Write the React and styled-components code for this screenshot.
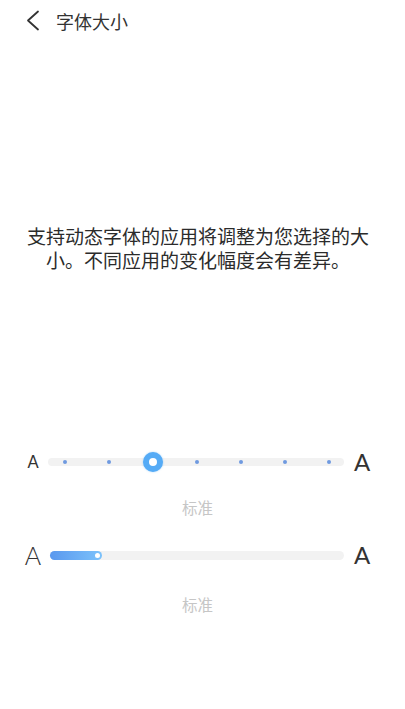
import React from "react";
import styled, { createGlobalStyle } from "styled-components";

const Global = createGlobalStyle`
  html, body { margin: 0; padding: 0; background: #ffffff; }
  body { font-family: "Noto Sans CJK SC", "Noto Sans", sans-serif; color: #333333; }
`;

const Page = styled.div`
  width: 405px;
  min-height: 709px;
  background: #fff;
  display: flex;
  flex-direction: column;
`;

const Header = styled.div`
  height: 42px;
  display: flex;
  align-items: center;
  padding-left: 26px;
`;

const BackButton = styled.div`
  width: 14px;
  height: 22px;
  display: flex;
  align-items: center;
`;

const Title = styled.div`
  margin-left: 16px;
  font-size: 18px;
  line-height: 24px;
  color: #333;
`;

const Description = styled.p`
  margin: 182px 0 0;
  padding: 0 31px 0 22px;
  font-size: 19px;
  line-height: 24px;
  text-align: center;
  color: #2b2b2b;
`;

const Sliders = styled.div`
  margin-top: 175px;
  display: flex;
  flex-direction: column;
`;

const Row = styled.div`
  height: 30px;
  display: flex;
  align-items: center;
  padding: 0 25px 0 18px;
  margin-top: ${(p) => p.$gap || 0}px;
`;

const Glyph = styled.div`
  width: ${(p) => p.$w}px;
  display: flex;
  justify-content: center;
  font-family: "Lato", "Noto Sans", sans-serif;
  font-size: ${(p) => p.$size}px;
  font-weight: ${(p) => p.$weight};
  line-height: 30px;
  color: #333;
`;

const Track = styled.div`
  position: relative;
  flex: 1;
  height: ${(p) => p.$h || 8}px;
  border-radius: 5px;
  background: #f2f2f2;
  margin-left: ${(p) => p.$ml || 0}px;
`;

const Dot = styled.span`
  position: absolute;
  top: 2px;
  width: 4px;
  height: 4px;
  margin-left: -2px;
  border-radius: 50%;
  background: #6f9ae0;
`;

const Thumb = styled.span`
  position: absolute;
  top: -6px;
  width: 20px;
  height: 20px;
  margin-left: -10px;
  box-sizing: border-box;
  border-radius: 50%;
  border: 6px solid #55abf6;
  background: #fff;
  box-shadow: 0 0 2px rgba(85, 171, 246, 0.5);
`;

const Fill = styled.div`
  position: absolute;
  left: 0;
  top: 0;
  bottom: 0;
  border-radius: 5px;
  background: linear-gradient(90deg, #5a98ee, #7cc2fb);
  display: flex;
  align-items: center;
  justify-content: flex-end;
  padding-right: 2px;
  box-sizing: border-box;
`;

const FillKnob = styled.span`
  width: 5px;
  height: 5px;
  border-radius: 50%;
  background: #fff;
`;

const Label = styled.div`
  margin-top: ${(p) => p.$gap}px;
  padding-right: 10px;
  font-size: 15.5px;
  line-height: 20px;
  text-align: center;
  color: #c6c6c6;
`;

const steps = [0, 1, 2, 3, 4, 5, 6];

export default function App() {
  return (
    <Page>
      <Global />
      <Header>
        <BackButton>
          <svg width="14" height="22" viewBox="0 0 14 22" fill="none">
            <polyline points="12,1.5 2,10.5 12,19.5" stroke="#333" strokeWidth="1.8" strokeLinecap="round" strokeLinejoin="round" />
          </svg>
        </BackButton>
        <Title>字体大小</Title>
      </Header>
      <Description>支持动态字体的应用将调整为您选择的大小。不同应用的变化幅度会有差异。</Description>
      <Sliders>
        <Row>
          <Glyph $w={30} $size={16.5} $weight={400}>A</Glyph>
          <Track>
            {steps.map((i) =>
              i === 2 ? (
                <Thumb key={i} style={{ left: 17 + i * 44 }} />
              ) : (
                <Dot key={i} style={{ left: 17 + i * 44 }} />
              )
            )}
          </Track>
          <Glyph $w={36} $size={24} $weight={400}>A</Glyph>
        </Row>
        <Label $gap={20}>标准</Label>
        <Row $gap={23}>
          <Glyph $w={30} $size={25} $weight={300}>A</Glyph>
          <Track $ml={2} $h={9}>
            <Fill style={{ width: 52 }}>
              <FillKnob />
            </Fill>
          </Track>
          <Glyph $w={36} $size={24} $weight={400}>A</Glyph>
        </Row>
        <Label $gap={24}>标准</Label>
      </Sliders>
    </Page>
  );
}
